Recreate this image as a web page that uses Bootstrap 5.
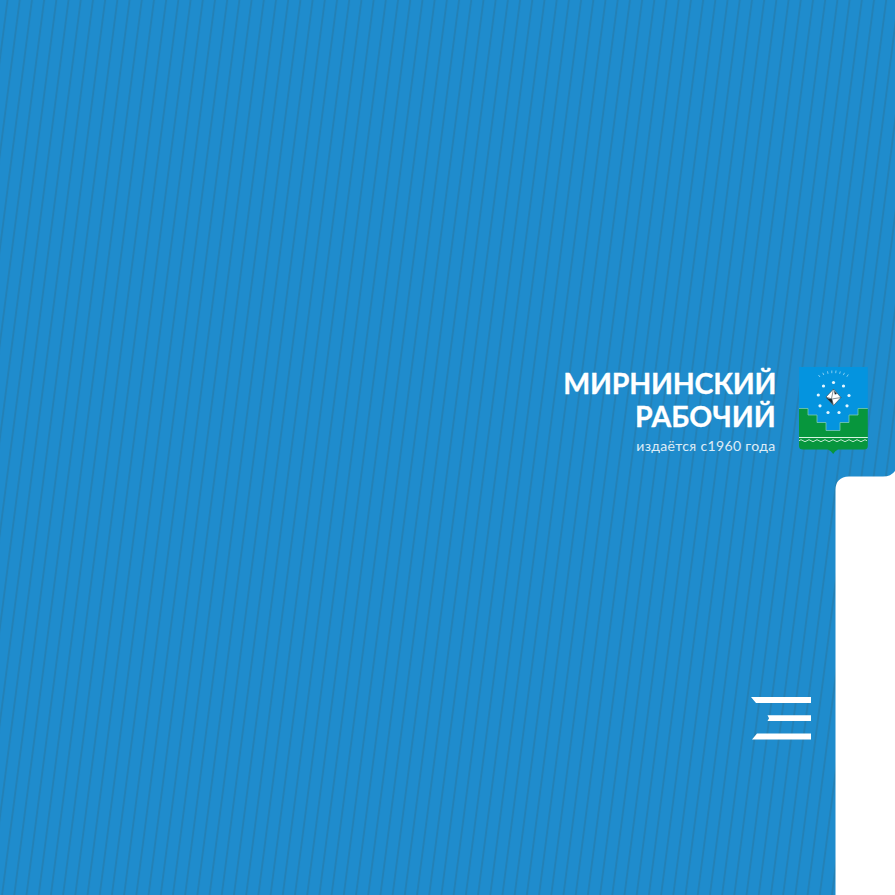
<!DOCTYPE html>
<html lang="ru">
<head>
<meta charset="utf-8">
<meta name="viewport" content="width=device-width, initial-scale=1">
<title>Мирнинский рабочий</title>
<link rel="stylesheet" href="https://cdn.jsdelivr.net/npm/bootstrap@5.3.0/dist/css/bootstrap.min.css">
<style>
body{background:#fff;font-family:Lato,"Open Sans",sans-serif}
.stage{height:895px;width:895px}
.backdrop{z-index:0}
.masthead{padding:367px 27px 0 0;height:697px;z-index:1}
.brand-name{font-size:28.5px;font-weight:700;line-height:33px;white-space:nowrap;-webkit-text-stroke:.3px #fff}
.line-one{letter-spacing:-.2px;margin-right:-1.300px}
.line-two{letter-spacing:.1px;margin-right:-.9px}
.since{font-size:14px;letter-spacing:.35px;line-height:20px;opacity:.85;margin:2.500px -.5px 0 0;white-space:nowrap}
.brand-text{margin-right:23px}
.menu-btn{margin-right:84px;line-height:0;z-index:1}
</style>
<script src="https://cdn.jsdelivr.net/npm/bootstrap@5.3.0/dist/js/bootstrap.bundle.min.js"></script>
</head>
<body class="m-0 overflow-hidden">
<main class="stage position-relative overflow-hidden">
  <svg class="backdrop position-absolute top-0 start-0" width="895" height="895" aria-hidden="true">
    <defs>
      <pattern id="stripes" width="12.204" height="895" patternUnits="userSpaceOnUse" patternTransform="matrix(1 0 -.1288 1 6.5 0)">
        <rect width="12.204" height="895" fill="#1f8ccd"/>
        <rect x="0" width="2.100" height="895" fill="#2284bd"/>
        <rect x=".6" width="1" height="895" fill="#247eb0"/>
      </pattern>
    </defs>
    <path fill="url(#stripes)" d="M0 0H895V471Q891 476.500 883 476.500H849Q835.500 477 835.500 490V895H0Z"/>
  </svg>
  <header class="masthead position-relative d-flex justify-content-end align-items-start text-white">
    <div class="brand-text text-end">
      <h1 class="brand-name m-0"><span class="line-one d-block">МИРНИНСКИЙ</span><span class="line-two d-block">РАБОЧИЙ</span></h1>
      <p class="since">издаётся с1960 года</p>
    </div>
    <svg width="70" height="88" viewBox="0 0 70 88" role="img" aria-label="Герб">
      <path fill="#0494df" d="M1 0H69.800V43H1Z"/>
      <path fill="#07963d" d="M1 41.500H10V48H19V55.500H28V63.500H42V55.500H51V48H60V41.500H69.800V79Q69.800 82.500 65.800 82.500H40Q37 83.500 35.200 87Q33 83.500 30 82.500H5Q1 82.500 1 79Z"/>
      <path fill="#0494df" d="M10 41H60V48H51V55.500H42V63.500H28V55.500H19V48H10Z"/>
      <path fill="none" stroke="#79c9b0" stroke-width=".8" d="M1 41.500H10V48H19V55.500H28V63.500H42V55.500H51V48H60V41.500H69.800"/>
      <path fill="none" stroke="#d9f4e2" stroke-width="1" d="M1 70.500H69.800"/>
      <path fill="none" stroke="#d9f4e2" stroke-width=".9" d="M1 73.700q2-2 4 0t4 0 4 0 4 0 4 0 4 0 4 0 4 0 4 0 4 0 4 0 4 0 4 0 4 0 4 0 4 0 4 0"/>
      <g fill="#e4f6ff">
        <circle cx="35.500" cy="15.500" r="1.600"/><circle cx="25.500" cy="19" r="1.600"/><circle cx="45.500" cy="19" r="1.600"/>
        <circle cx="20.300" cy="28" r="1.600"/><circle cx="51" cy="28.500" r="1.600"/><circle cx="22" cy="38.800" r="1.600"/>
        <circle cx="49" cy="38.800" r="1.600"/><circle cx="30" cy="45.500" r="1.600"/><circle cx="41" cy="45.500" r="1.600"/>
      </g>
      <path fill="none" stroke="#a6daf5" stroke-width=".8" d="M20.500 8l1.500 2M24.800 5.800l1 2.200M29.500 4.300l.5 2.500M33.800 3.500v2.700M38 3.500l-.3 2.700M42.300 4.500l-.7 2.300M46.500 5.800l-1.200 2.300M50.300 7.500l-1.500 2.300"/>
      <path fill="#fff" d="M35.500 22L43 30.500L35.500 38.500L28 30Z"/>
      <path fill="none" stroke="#30444f" stroke-width=".6" d="M35.500 22L43 30.500L35.500 38.500L28 30ZM35.500 22L33.500 31.500L35.500 38M28 30L34 32L43 30.500"/>
      <path fill="#142530" d="M28.500 31L34 32.300L35 37.500ZM36 23.500L39 27L36.800 27.500Z"/>
    </svg>
  </header>
  <nav class="d-flex justify-content-end">
    <button class="menu-btn btn p-0 border-0 rounded-0 position-relative" type="button" aria-label="Меню">
      <svg width="60" height="43" viewBox="0 0 60 43" fill="#fff"><path d="M0 0H60V6H5ZM16.500 18.300H60V24H16.500L18 21.200ZM6 36.500H60V42.500H1Z"/></svg>
    </button>
  </nav>
</main>
</body>
</html>
